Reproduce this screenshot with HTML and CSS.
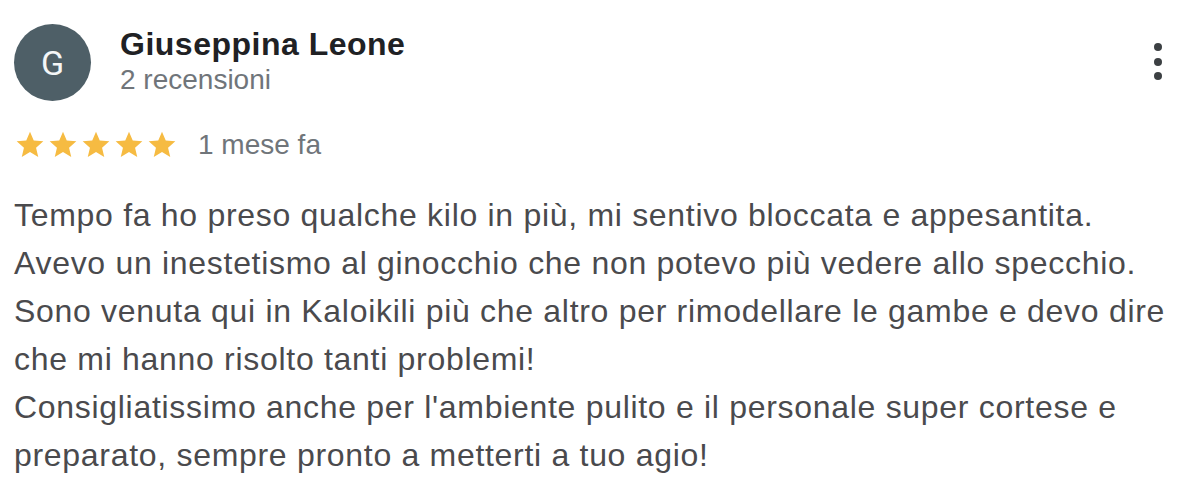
FILE: index.html
```html
<!DOCTYPE html>
<html lang="it">
<head>
<meta charset="utf-8">
<title>Recensione</title>
<link rel="stylesheet" href="styles.css">
</head>
<body>
<article class="review">
  <header class="review-head">
    <div class="avatar">G</div>
    <div class="author">
      <div class="author-name">Giuseppina Leone</div>
      <div class="author-meta">2 recensioni</div>
    </div>
    <button class="menu" aria-label="Altre opzioni">
      <span class="dot"></span><span class="dot"></span><span class="dot"></span>
    </button>
  </header>
  <div class="rating">
    <div class="stars">
      <svg class="star" viewBox="0 0 24 24"><path d="M12 17.27L18.18 21l-1.64-7.03L22 9.24l-7.19-.61L12 2 9.19 8.63 2 9.24l5.46 4.73L5.82 21z"/></svg>
      <svg class="star" viewBox="0 0 24 24"><path d="M12 17.27L18.18 21l-1.64-7.03L22 9.24l-7.19-.61L12 2 9.19 8.63 2 9.24l5.46 4.73L5.82 21z"/></svg>
      <svg class="star" viewBox="0 0 24 24"><path d="M12 17.27L18.18 21l-1.64-7.03L22 9.24l-7.19-.61L12 2 9.19 8.63 2 9.24l5.46 4.73L5.82 21z"/></svg>
      <svg class="star" viewBox="0 0 24 24"><path d="M12 17.27L18.18 21l-1.64-7.03L22 9.24l-7.19-.61L12 2 9.19 8.63 2 9.24l5.46 4.73L5.82 21z"/></svg>
      <svg class="star" viewBox="0 0 24 24"><path d="M12 17.27L18.18 21l-1.64-7.03L22 9.24l-7.19-.61L12 2 9.19 8.63 2 9.24l5.46 4.73L5.82 21z"/></svg>
    </div>
    <span class="date">1 mese fa</span>
  </div>
  <p class="review-text">Tempo fa ho preso qualche kilo in più, mi sentivo bloccata e appesantita.<br>Avevo un inestetismo al ginocchio che non potevo più vedere allo specchio.<br>Sono venuta qui in Kaloikili più che altro per rimodellare le gambe e devo dire<br>che mi hanno risolto tanti problemi!<br>Consigliatissimo anche per l'ambiente pulito e il personale super cortese e<br>preparato, sempre pronto a metterti a tuo agio!</p>
</article>
</body>
</html>
```

FILE: styles.css
```css
html, body {
  margin: 0;
  padding: 0;
  background: #ffffff;
}

body {
  font-family: "Liberation Sans", Arial, Helvetica, sans-serif;
  color: #3c4043;
}

.review {
  padding: 24px 36px 0 14px;
}

.review-head {
  display: flex;
  align-items: flex-start;
}

.avatar {
  width: 77px;
  height: 77px;
  border-radius: 50%;
  background: #4e5f67;
  color: #f4f6f7;
  font-family: Roboto, "Liberation Sans", sans-serif;
  font-size: 34px;
  display: flex;
  align-items: center;
  justify-content: center;
  flex: none;
}

.author {
  margin-left: 29px;
  flex: 1;
  padding-top: 3px;
}

.author-name {
  font-weight: bold;
  font-size: 32px;
  letter-spacing: 0.5px;
  line-height: 35px;
  color: #202124;
}

.author-meta {
  font-size: 28px;
  line-height: 36px;
  color: #70757a;
}

.menu {
  border: 0;
  background: none;
  padding: 0;
  margin-top: 19px;
  width: 12px;
  display: flex;
  flex-direction: column;
  align-items: center;
  gap: 6.5px;
}

.dot {
  width: 8px;
  height: 8px;
  border-radius: 50%;
  background: #3c4043;
}

.rating {
  display: flex;
  align-items: center;
  margin-top: 28px;
}

.stars {
  display: flex;
  gap: 1px;
}

.star {
  width: 32px;
  height: 32px;
  fill: #f6bb42;
}

.date {
  margin-left: 20px;
  font-size: 28px;
  color: #70757a;
}

.review-text {
  margin: 30px -30px 0 0;
  font-size: 32px;
  letter-spacing: 0.7px;
  line-height: 48px;
  white-space: nowrap;
  color: #4a4a4d;
}
```
